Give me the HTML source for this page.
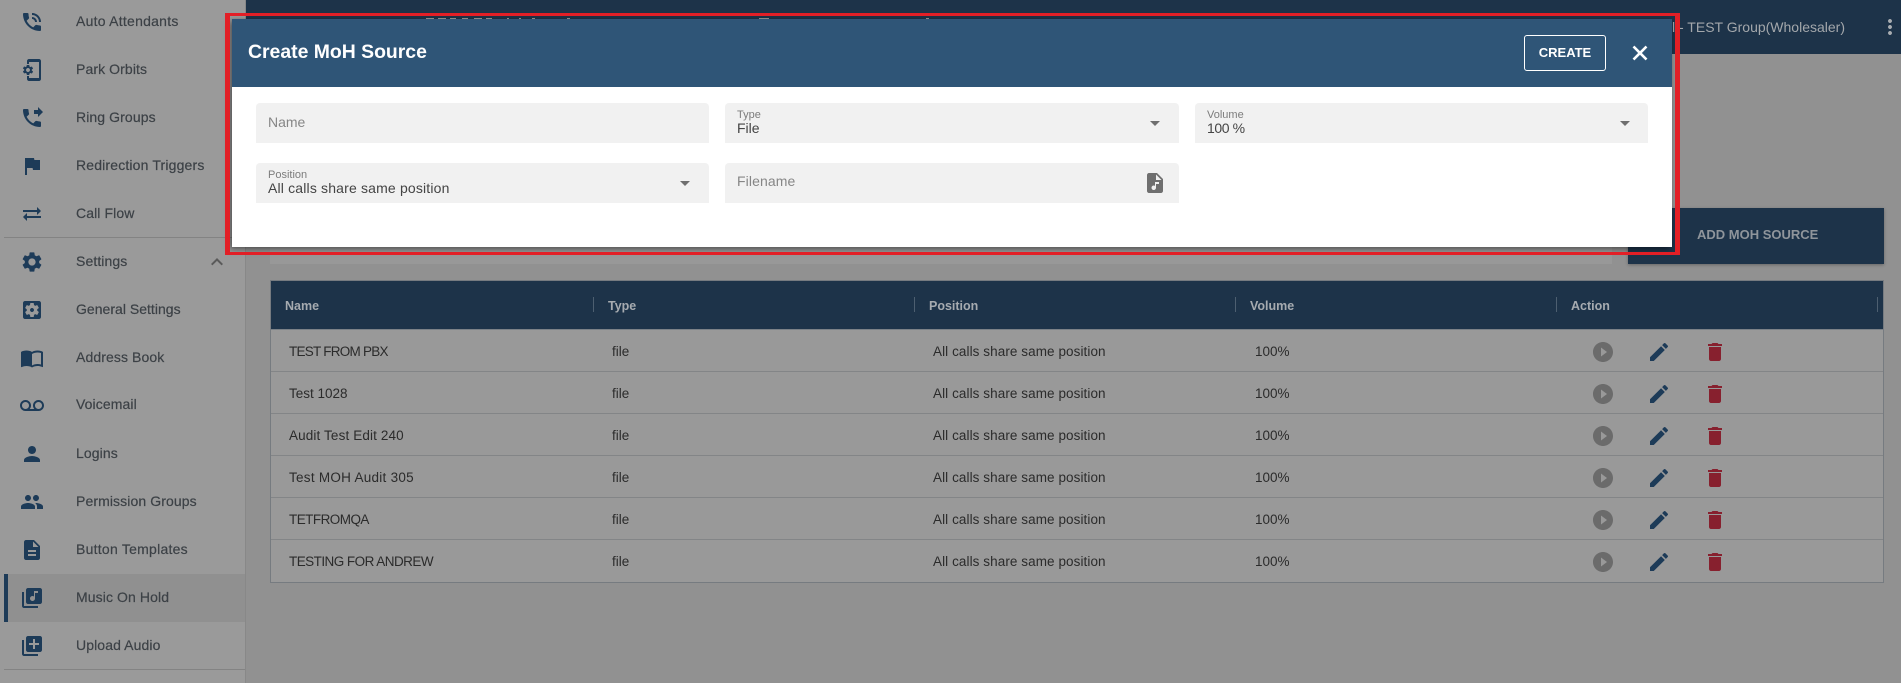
<!DOCTYPE html>
<html lang="en">
<head>
<meta charset="utf-8">
<title>Create MoH Source</title>
<style>
html,body{margin:0;padding:0;width:1901px;height:683px;overflow:hidden;background:#919191;font-family:"Liberation Sans",sans-serif}
*{box-sizing:border-box}
.a{position:absolute}
svg{position:absolute;width:24px;height:24px;display:block}
.s{position:absolute;left:76px;font-size:14px;line-height:20px;height:20px;color:#3c4146;white-space:nowrap;letter-spacing:.1px;-webkit-text-stroke:.2px #3c4146}
.si{fill:#1d3b58;left:20px}
.th{position:absolute;top:297px;font-size:12.5px;line-height:18px;font-weight:bold;color:#a6abb0;white-space:nowrap}
.sep{position:absolute;top:297px;width:1px;height:15px;background:#4d5f70}
.c{position:absolute;font-size:13.5px;line-height:18px;color:#2b2b2b;white-space:nowrap}
.rb{position:absolute;left:271px;width:1612px;height:1px;background:#838587}
.f{position:absolute;background:#f1f1f1;border-radius:4px 4px 0 0;height:40px}
.lab{position:absolute;font-size:11px;line-height:12px;color:#7c7c7c;white-space:nowrap}
.val{position:absolute;font-size:14px;line-height:18px;color:#444;white-space:nowrap}
.ph{position:absolute;font-size:14px;line-height:18px;color:#868686;white-space:nowrap}
.strip{position:absolute;top:18px;height:1px;background:#9a9a9a}
</style>
</head>
<body>

<!-- sidebar -->
<div class="a" style="left:0;top:0;width:246px;height:683px;background:#9a9a9a;border-right:1px solid #888"></div>
<div class="a" style="left:4px;top:574px;width:241px;height:48px;background:#909090"></div>
<div class="a" style="left:4px;top:574px;width:4px;height:48px;background:#1d3b58"></div>
<div class="a" style="left:4px;top:237px;width:241px;height:1px;background:#838383"></div>
<div class="a" style="left:4px;top:669px;width:241px;height:1px;background:#838383"></div>

<svg class="si" style="top:10px" viewBox="0 0 24 24"><path d="M20 15.5c-1.25 0-2.45-.2-3.57-.57-.35-.11-.74-.03-1.02.24l-2.2 2.2c-2.83-1.44-5.15-3.75-6.59-6.59l2.2-2.21c.28-.26.36-.65.25-1C8.7 6.45 8.5 5.25 8.5 4c0-.55-.45-1-1-1H4c-.55 0-1 .45-1 1 0 9.39 7.61 17 17 17 .55 0 1-.45 1-1v-3.5c0-.55-.45-1-1-1zM19 12h2c0-4.97-4.03-9-9-9v2c3.87 0 7 3.13 7 7zm-4 0h2c0-2.76-2.24-5-5-5v2c1.66 0 3 1.34 3 3z"/></svg>
<div class="s" style="top:11px;letter-spacing:.25px">Auto Attendants</div>
<svg class="si" style="top:58px" viewBox="0 0 24 24"><path d="M11.8 12.5v-1l1.1-.8c.1-.1.1-.2.1-.3l-1-1.7c-.1-.1-.2-.2-.3-.1l-1.3.4c-.3-.2-.6-.4-.9-.5l-.2-1.3c0-.1-.1-.2-.3-.2H7c-.1 0-.2.1-.3.2l-.2 1.3c-.3.1-.6.3-.9.5l-1.3-.5c-.1 0-.2 0-.3.1l-1 1.7c-.1.1 0 .2.1.3l1.1.8v1l-1.1.8c-.1.2-.1.3-.1.4l1 1.7c.1.1.2.2.3.1l1.4-.4c.3.2.6.4.9.5l.2 1.3c-.1.1.1.2.2.2h2c.1 0 .2-.1.3-.2l.2-1.3c.3-.1.6-.3.9-.5l1.3.5c.1 0 .2 0 .3-.1l1-1.7c.1-.1 0-.2-.1-.3l-1.1-.9zM8 14c-1.1 0-2-.9-2-2s.9-2 2-2 2 .9 2 2-.9 2-2 2zM19 1H9c-1.1 0-2 .9-2 2v3h2V4h10v16H9v-2H7v3c0 1.1.9 2 2 2h10c1.1 0 2-.9 2-2V3c0-1.1-.9-2-2-2z"/></svg>
<div class="s" style="top:59px">Park Orbits</div>
<svg class="si" style="top:106px" viewBox="0 0 24 24"><path d="M18 11l5-5-5-5v3h-4v4h4v3zm2 4.5c-1.25 0-2.45-.2-3.57-.57-.35-.11-.74-.03-1.02.24l-2.2 2.2c-2.83-1.44-5.15-3.75-6.59-6.59l2.2-2.21c.28-.26.36-.65.25-1C8.7 6.45 8.5 5.25 8.5 4c0-.55-.45-1-1-1H4c-.55 0-1 .45-1 1 0 9.39 7.61 17 17 17 .55 0 1-.45 1-1v-3.5c0-.55-.45-1-1-1z"/></svg>
<div class="s" style="top:107px">Ring Groups</div>
<svg class="si" style="top:154px" viewBox="0 0 24 24"><path d="M14.4 6L14 4H5v17h2v-7h5.6l.4 2h7V6z"/></svg>
<div class="s" style="top:155px;letter-spacing:.16px">Redirection Triggers</div>
<svg class="si" style="top:202px" viewBox="0 0 24 24"><path d="M6.99 11L3 15l3.99 4v-3H21v-2H6.99v-3zM21 9l-3.99-4v3H3v2h14.01v3L21 9z"/></svg>
<div class="s" style="top:203px">Call Flow</div>
<svg class="si" style="top:250px" viewBox="0 0 24 24"><path d="M19.14 12.94c.04-.3.06-.61.06-.94 0-.32-.02-.64-.07-.94l2.03-1.58c.18-.14.23-.41.12-.61l-1.92-3.32c-.12-.22-.37-.29-.59-.22l-2.39.96c-.5-.38-1.03-.7-1.62-.94l-.36-2.54c-.04-.24-.24-.41-.48-.41h-3.84c-.24 0-.43.17-.47.41l-.36 2.54c-.59.24-1.13.57-1.62.94l-2.39-.96c-.22-.08-.47 0-.59.22L2.74 8.87c-.12.21-.08.47.12.61l2.03 1.58c-.05.3-.09.63-.09.94s.02.64.07.94l-2.03 1.58c-.18.14-.23.41-.12.61l1.92 3.32c.12.22.37.29.59.22l2.39-.96c.5.38 1.03.7 1.62.94l.36 2.54c.05.24.24.41.48.41h3.84c.24 0 .44-.17.47-.41l.36-2.54c.59-.24 1.13-.56 1.62-.94l2.39.96c.22.08.47 0 .59-.22l1.92-3.32c.12-.22.07-.47-.12-.61l-2.01-1.58zM12 15.6c-1.98 0-3.6-1.62-3.6-3.6s1.62-3.6 3.6-3.6 3.6 1.62 3.6 3.6-1.62 3.6-3.6 3.6z"/></svg>
<div class="s" style="top:251px">Settings</div>
<svg style="left:205px;top:250px;fill:#5a5a5a" viewBox="0 0 24 24"><path d="M12 8l-6 6 1.41 1.41L12 10.83l4.59 4.58L18 14z"/></svg>
<svg class="si" style="top:298px" viewBox="0 0 24 24"><path d="M12 10c-1.1 0-2 .9-2 2s.9 2 2 2 2-.9 2-2-.9-2-2-2zm7-7H5c-1.11 0-2 .9-2 2v14c0 1.1.89 2 2 2h14c1.11 0 2-.9 2-2V5c0-1.1-.89-2-2-2zm-1.75 9c0 .23-.02.46-.05.68l1.48 1.16c.13.11.17.3.08.45l-1.4 2.42c-.09.15-.27.21-.43.15l-1.74-.7c-.36.28-.76.51-1.18.69l-.26 1.85c-.03.17-.18.3-.35.3h-2.8c-.17 0-.32-.13-.35-.29l-.26-1.85c-.43-.18-.82-.41-1.18-.69l-1.74.7c-.16.06-.34 0-.43-.15l-1.4-2.42c-.09-.15-.05-.34.08-.45l1.48-1.16c-.03-.23-.05-.46-.05-.69 0-.23.02-.46.05-.68l-1.48-1.16c-.13-.11-.17-.3-.08-.45l1.4-2.42c.09-.15.27-.21.43-.15l1.74.7c.36-.28.76-.51 1.18-.69l.26-1.85c.03-.17.18-.3.35-.3h2.8c.17 0 .32.13.35.29l.26 1.85c.43.18.82.41 1.18.69l1.74-.7c.16-.06.34 0 .43.15l1.4 2.42c.09.15.05.34-.08.45l-1.48 1.16c.03.23.05.46.05.69z"/></svg>
<div class="s" style="top:299px;letter-spacing:.02px">General Settings</div>
<svg class="si" style="top:346px" viewBox="0 0 24 24"><path d="M21 5c-1.11-.35-2.33-.5-3.5-.5-1.95 0-4.05.4-5.5 1.5-1.45-1.1-3.55-1.5-5.5-1.5S2.45 4.9 1 6v14.65c0 .25.25.5.5.5.1 0 .15-.05.25-.05C3.1 20.45 5.05 20 6.5 20c1.95 0 4.05.4 5.5 1.5 1.35-.85 3.8-1.5 5.5-1.5 1.65 0 3.35.3 4.75 1.05.1.05.15.05.25.05.25 0 .5-.25.5-.5V6c-.6-.45-1.25-.75-2-1zm0 13.5c-1.1-.35-2.3-.5-3.5-.5-1.7 0-4.15.65-5.5 1.5V8c1.35-.85 3.8-1.5 5.5-1.5 1.2 0 2.4.15 3.5.5v11.5z"/></svg>
<div class="s" style="top:347px">Address Book</div>
<svg class="si" style="top:394px" viewBox="0 0 24 24"><path d="M18.5 6C15.46 6 13 8.46 13 11.5c0 1.33.47 2.55 1.26 3.5H9.74c.79-.95 1.26-2.17 1.26-3.5C11 8.46 8.54 6 5.5 6S0 8.46 0 11.5 2.46 17 5.5 17h13c3.04 0 5.5-2.46 5.5-5.5S21.54 6 18.5 6zm-13 9C3.57 15 2 13.43 2 11.5S3.57 8 5.5 8 9 9.57 9 11.5 7.43 15 5.5 15zm13 0c-1.93 0-3.5-1.57-3.5-3.5S16.57 8 18.5 8 22 9.57 22 11.5 20.43 15 18.5 15z"/></svg>
<div class="s" style="top:394px">Voicemail</div>
<svg class="si" style="top:442px" viewBox="0 0 24 24"><path d="M12 12c2.21 0 4-1.79 4-4s-1.79-4-4-4-4 1.79-4 4 1.79 4 4 4zm0 2c-2.67 0-8 1.34-8 4v2h16v-2c0-2.66-5.33-4-8-4z"/></svg>
<div class="s" style="top:443px">Logins</div>
<svg class="si" style="top:490px" viewBox="0 0 24 24"><path d="M16 11c1.66 0 2.99-1.34 2.99-3S17.66 5 16 5c-1.66 0-3 1.34-3 3s1.34 3 3 3zm-8 0c1.66 0 2.99-1.34 2.99-3S9.66 5 8 5C6.34 5 5 6.34 5 8s1.34 3 3 3zm0 2c-2.33 0-7 1.17-7 3.5V19h14v-2.5c0-2.33-4.67-3.5-7-3.5zm8 0c-.29 0-.62.02-.97.05 1.16.84 1.97 1.97 1.97 3.45V19h6v-2.5c0-2.33-4.67-3.5-7-3.5z"/></svg>
<div class="s" style="top:491px">Permission Groups</div>
<svg class="si" style="top:538px" viewBox="0 0 24 24"><path d="M14 2H6c-1.1 0-1.99.9-1.99 2L4 20c0 1.1.89 2 1.99 2H18c1.1 0 2-.9 2-2V8l-6-6zm2 16H8v-2h8v2zm0-4H8v-2h8v2zm-3-5V3.5L18.5 9H13z"/></svg>
<div class="s" style="top:539px;letter-spacing:.25px">Button Templates</div>
<svg class="si" style="top:586px" viewBox="0 0 24 24"><path d="M20 2H8c-1.1 0-2 .9-2 2v12c0 1.1.9 2 2 2h12c1.1 0 2-.9 2-2V4c0-1.1-.9-2-2-2zm-2 5h-3v5.5c0 1.38-1.12 2.5-2.5 2.5S10 13.88 10 12.5s1.12-2.5 2.5-2.5c.57 0 1.08.19 1.5.51V5h4v2zM4 6H2v14c0 1.1.9 2 2 2h14v-2H4V6z"/></svg>
<div class="s" style="top:587px">Music On Hold</div>
<svg class="si" style="top:634px" viewBox="0 0 24 24"><path d="M4 6H2v14c0 1.1.9 2 2 2h14v-2H4V6zm16-4H8c-1.1 0-2 .9-2 2v12c0 1.1.9 2 2 2h12c1.1 0 2-.9 2-2V4c0-1.1-.9-2-2-2zm-1 9h-4v4h-2v-4H9V9h4V5h2v4h4v2z"/></svg>
<div class="s" style="top:635px">Upload Audio</div>

<!-- top bar -->
<div class="a" style="left:246px;top:0;width:1655px;height:54px;background:#1d3349"></div>
<div class="a" style="right:56px;top:18px;font-size:14px;line-height:18px;color:#a3a7ab;white-space:nowrap">Channel - TEST Group(Wholesaler)</div>
<svg style="left:1878px;top:15px;fill:#a9adb1" viewBox="0 0 24 24"><path d="M12 8c1.1 0 2-.9 2-2s-.9-2-2-2-2 .9-2 2 .9 2 2 2zm0 2c-1.1 0-2 .9-2 2s.9 2 2 2 2-.9 2-2-.9-2-2-2zm0 6c-1.1 0-2 .9-2 2s.9 2 2 2 2-.9 2-2-.9-2-2-2z"/></svg>

<!-- bar behind modal, add button -->
<div class="a" style="left:270px;top:200px;width:1342px;height:64px;background:#989898"></div>
<div class="a" style="left:1628px;top:208px;width:256px;height:56px;background:#1d3349;box-shadow:0 1px 3px rgba(0,0,0,.3)"></div>
<div class="a" style="left:1697px;top:226px;font-size:13px;line-height:18px;font-weight:bold;color:#8f959b;white-space:nowrap">ADD MOH SOURCE</div>

<!-- table -->
<div class="a" style="left:270px;top:280px;width:1614px;height:303px;background:#999;border:1px solid #767b80"></div>
<div class="a" style="left:271px;top:281px;width:1612px;height:48px;background:#1d3349"></div>
<div class="a" style="left:271px;top:329px;width:1612px;height:1px;background:#7b8187"></div>
<div class="th" style="left:285px">Name</div><div class="sep" style="left:593px"></div>
<div class="th" style="left:608px">Type</div><div class="sep" style="left:914px"></div>
<div class="th" style="left:929px">Position</div><div class="sep" style="left:1235px"></div>
<div class="th" style="left:1250px">Volume</div><div class="sep" style="left:1556px"></div>
<div class="th" style="left:1571px">Action</div><div class="sep" style="left:1877px"></div>

<div class="rb" style="top:371px"></div><div class="rb" style="top:413px"></div><div class="rb" style="top:455px"></div><div class="rb" style="top:497px"></div><div class="rb" style="top:539px"></div>

<div class="c" style="left:289px;top:343px;letter-spacing:-.75px">TEST FROM PBX</div><div class="c" style="left:612px;top:343px">file</div><div class="c" style="left:933px;top:343px;letter-spacing:.08px">All calls share same position</div><div class="c" style="left:1255px;top:343px">100%</div>
<div class="c" style="left:289px;top:385px">Test 1028</div><div class="c" style="left:612px;top:385px">file</div><div class="c" style="left:933px;top:385px;letter-spacing:.08px">All calls share same position</div><div class="c" style="left:1255px;top:385px">100%</div>
<div class="c" style="left:289px;top:427px;letter-spacing:.13px">Audit Test Edit 240</div><div class="c" style="left:612px;top:427px">file</div><div class="c" style="left:933px;top:427px;letter-spacing:.08px">All calls share same position</div><div class="c" style="left:1255px;top:427px">100%</div>
<div class="c" style="left:289px;top:469px;letter-spacing:.27px">Test MOH Audit 305</div><div class="c" style="left:612px;top:469px">file</div><div class="c" style="left:933px;top:469px;letter-spacing:.08px">All calls share same position</div><div class="c" style="left:1255px;top:469px">100%</div>
<div class="c" style="left:289px;top:511px;letter-spacing:-.54px">TETFROMQA</div><div class="c" style="left:612px;top:511px">file</div><div class="c" style="left:933px;top:511px;letter-spacing:.08px">All calls share same position</div><div class="c" style="left:1255px;top:511px">100%</div>
<div class="c" style="left:289px;top:553px;letter-spacing:-.54px">TESTING FOR ANDREW</div><div class="c" style="left:612px;top:553px">file</div><div class="c" style="left:933px;top:553px;letter-spacing:.08px">All calls share same position</div><div class="c" style="left:1255px;top:553px">100%</div>

<svg style="left:1591px;top:340px;fill:#6b6b6b" viewBox="0 0 24 24"><path d="M12 2C6.48 2 2 6.48 2 12s4.48 10 10 10 10-4.48 10-10S17.52 2 12 2zm-2 14.5v-9l6 4.5-6 4.5z"/></svg>
<svg style="left:1647px;top:340px;fill:#1d3b58" viewBox="0 0 24 24"><path d="M3 17.25V21h3.75L17.81 9.94l-3.75-3.75L3 17.25zM20.71 7.04c.39-.39.39-1.02 0-1.41l-2.34-2.34c-.39-.39-1.02-.39-1.41 0l-1.83 1.83 3.75 3.75 1.83-1.83z"/></svg>
<svg style="left:1703px;top:340px;fill:#87202e" viewBox="0 0 24 24"><path d="M6 19c0 1.1.9 2 2 2h8c1.1 0 2-.9 2-2V7H6v12zM19 4h-3.5l-1-1h-5l-1 1H5v2h14V4z"/></svg>
<svg style="left:1591px;top:382px;fill:#6b6b6b" viewBox="0 0 24 24"><path d="M12 2C6.48 2 2 6.48 2 12s4.48 10 10 10 10-4.48 10-10S17.52 2 12 2zm-2 14.5v-9l6 4.5-6 4.5z"/></svg>
<svg style="left:1647px;top:382px;fill:#1d3b58" viewBox="0 0 24 24"><path d="M3 17.25V21h3.75L17.81 9.94l-3.75-3.75L3 17.25zM20.71 7.04c.39-.39.39-1.02 0-1.41l-2.34-2.34c-.39-.39-1.02-.39-1.41 0l-1.83 1.83 3.75 3.75 1.83-1.83z"/></svg>
<svg style="left:1703px;top:382px;fill:#87202e" viewBox="0 0 24 24"><path d="M6 19c0 1.1.9 2 2 2h8c1.1 0 2-.9 2-2V7H6v12zM19 4h-3.5l-1-1h-5l-1 1H5v2h14V4z"/></svg>
<svg style="left:1591px;top:424px;fill:#6b6b6b" viewBox="0 0 24 24"><path d="M12 2C6.48 2 2 6.48 2 12s4.48 10 10 10 10-4.48 10-10S17.52 2 12 2zm-2 14.5v-9l6 4.5-6 4.5z"/></svg>
<svg style="left:1647px;top:424px;fill:#1d3b58" viewBox="0 0 24 24"><path d="M3 17.25V21h3.75L17.81 9.94l-3.75-3.75L3 17.25zM20.71 7.04c.39-.39.39-1.02 0-1.41l-2.34-2.34c-.39-.39-1.02-.39-1.41 0l-1.83 1.83 3.75 3.75 1.83-1.83z"/></svg>
<svg style="left:1703px;top:424px;fill:#87202e" viewBox="0 0 24 24"><path d="M6 19c0 1.1.9 2 2 2h8c1.1 0 2-.9 2-2V7H6v12zM19 4h-3.5l-1-1h-5l-1 1H5v2h14V4z"/></svg>
<svg style="left:1591px;top:466px;fill:#6b6b6b" viewBox="0 0 24 24"><path d="M12 2C6.48 2 2 6.48 2 12s4.48 10 10 10 10-4.48 10-10S17.52 2 12 2zm-2 14.5v-9l6 4.5-6 4.5z"/></svg>
<svg style="left:1647px;top:466px;fill:#1d3b58" viewBox="0 0 24 24"><path d="M3 17.25V21h3.75L17.81 9.94l-3.75-3.75L3 17.25zM20.71 7.04c.39-.39.39-1.02 0-1.41l-2.34-2.34c-.39-.39-1.02-.39-1.41 0l-1.83 1.83 3.75 3.75 1.83-1.83z"/></svg>
<svg style="left:1703px;top:466px;fill:#87202e" viewBox="0 0 24 24"><path d="M6 19c0 1.1.9 2 2 2h8c1.1 0 2-.9 2-2V7H6v12zM19 4h-3.5l-1-1h-5l-1 1H5v2h14V4z"/></svg>
<svg style="left:1591px;top:508px;fill:#6b6b6b" viewBox="0 0 24 24"><path d="M12 2C6.48 2 2 6.48 2 12s4.48 10 10 10 10-4.48 10-10S17.52 2 12 2zm-2 14.5v-9l6 4.5-6 4.5z"/></svg>
<svg style="left:1647px;top:508px;fill:#1d3b58" viewBox="0 0 24 24"><path d="M3 17.25V21h3.75L17.81 9.94l-3.75-3.75L3 17.25zM20.71 7.04c.39-.39.39-1.02 0-1.41l-2.34-2.34c-.39-.39-1.02-.39-1.41 0l-1.83 1.83 3.75 3.75 1.83-1.83z"/></svg>
<svg style="left:1703px;top:508px;fill:#87202e" viewBox="0 0 24 24"><path d="M6 19c0 1.1.9 2 2 2h8c1.1 0 2-.9 2-2V7H6v12zM19 4h-3.5l-1-1h-5l-1 1H5v2h14V4z"/></svg>
<svg style="left:1591px;top:550px;fill:#6b6b6b" viewBox="0 0 24 24"><path d="M12 2C6.48 2 2 6.48 2 12s4.48 10 10 10 10-4.48 10-10S17.52 2 12 2zm-2 14.5v-9l6 4.5-6 4.5z"/></svg>
<svg style="left:1647px;top:550px;fill:#1d3b58" viewBox="0 0 24 24"><path d="M3 17.25V21h3.75L17.81 9.94l-3.75-3.75L3 17.25zM20.71 7.04c.39-.39.39-1.02 0-1.41l-2.34-2.34c-.39-.39-1.02-.39-1.41 0l-1.83 1.83 3.75 3.75 1.83-1.83z"/></svg>
<svg style="left:1703px;top:550px;fill:#87202e" viewBox="0 0 24 24"><path d="M6 19c0 1.1.9 2 2 2h8c1.1 0 2-.9 2-2V7H6v12zM19 4h-3.5l-1-1h-5l-1 1H5v2h14V4z"/></svg>

<!-- title text slivers visible above modal -->
<div class="strip" style="left:426px;width:8px"></div>
<div class="strip" style="left:438px;width:8px"></div>
<div class="strip" style="left:450px;width:6px"></div>
<div class="strip" style="left:462px;width:6px"></div>
<div class="strip" style="left:474px;width:8px"></div>
<div class="strip" style="left:486px;width:6px"></div>
<div class="strip" style="left:507px;width:2px"></div>
<div class="strip" style="left:519px;width:2px"></div>
<div class="strip" style="left:532px;width:3px"></div>
<div class="strip" style="left:567px;width:3px"></div>
<div class="strip" style="left:759px;width:10px"></div>
<div class="strip" style="left:926px;width:3px"></div>

<!-- modal -->
<div class="a" style="left:232px;top:19px;width:1440px;height:228px;background:#fff;box-shadow:-2px 2px 6px rgba(0,0,0,.5)"></div>
<div class="a" style="left:232px;top:19px;width:1440px;height:68px;background:#2f5577"></div>
<div class="a" style="left:248px;top:40px;font-size:19.4px;line-height:24px;font-weight:bold;color:#fff;white-space:nowrap">Create MoH Source</div>
<div class="a" style="left:1524px;top:35px;width:82px;height:36px;border:1px solid #fff;border-radius:3px;color:#fff;font-size:13px;font-weight:bold;line-height:33px;text-align:center">CREATE</div>
<svg style="left:1628px;top:41px;fill:#fff;stroke:#fff;stroke-width:.6" viewBox="0 0 24 24"><path d="M19 6.41L17.59 5 12 10.59 6.41 5 5 6.41 10.59 12 5 17.59 6.41 19 12 13.41 17.59 19 19 17.59 13.41 12z"/></svg>

<div class="f" style="left:256px;top:103px;width:453px"></div>
<div class="ph" style="left:268px;top:113px">Name</div>

<div class="f" style="left:725px;top:103px;width:454px"></div>
<div class="lab" style="left:737px;top:109px">Type</div>
<div class="val" style="left:737px;top:119px">File</div>
<svg style="left:1143px;top:111px;fill:#6f6f6f" viewBox="0 0 24 24"><path d="M7 10l5 5 5-5z"/></svg>

<div class="f" style="left:1195px;top:103px;width:453px"></div>
<div class="lab" style="left:1207px;top:109px">Volume</div>
<div class="val" style="left:1207px;top:119px;letter-spacing:-.4px">100 %</div>
<svg style="left:1613px;top:111px;fill:#6f6f6f" viewBox="0 0 24 24"><path d="M7 10l5 5 5-5z"/></svg>

<div class="f" style="left:256px;top:163px;width:453px"></div>
<div class="lab" style="left:268px;top:169px">Position</div>
<div class="val" style="left:268px;top:179px;letter-spacing:.17px">All calls share same position</div>
<svg style="left:673px;top:171px;fill:#6f6f6f" viewBox="0 0 24 24"><path d="M7 10l5 5 5-5z"/></svg>

<div class="f" style="left:725px;top:163px;width:454px"></div>
<div class="ph" style="left:737px;top:172px;letter-spacing:.1px">Filename</div>
<svg style="left:1143px;top:171px;fill:#6f6f6f" viewBox="0 0 24 24"><path d="M14 2H6c-1.1 0-2 .9-2 2v16c0 1.1.9 2 2 2h12c1.1 0 2-.9 2-2V8l-6-6zm2 11h-3v3.75c0 1.24-1.01 2.25-2.25 2.25S8.5 17.99 8.5 16.75s1.01-2.25 2.25-2.25c.46 0 .89.14 1.25.38V11h4v2zm-3-4V3.5L18.5 9H13z"/></svg>

<!-- red annotation frame -->
<div class="a" style="left:225px;top:13px;width:1455px;height:242px;border:solid #e21f26;border-width:3px 5px"></div>

</body>
</html>
